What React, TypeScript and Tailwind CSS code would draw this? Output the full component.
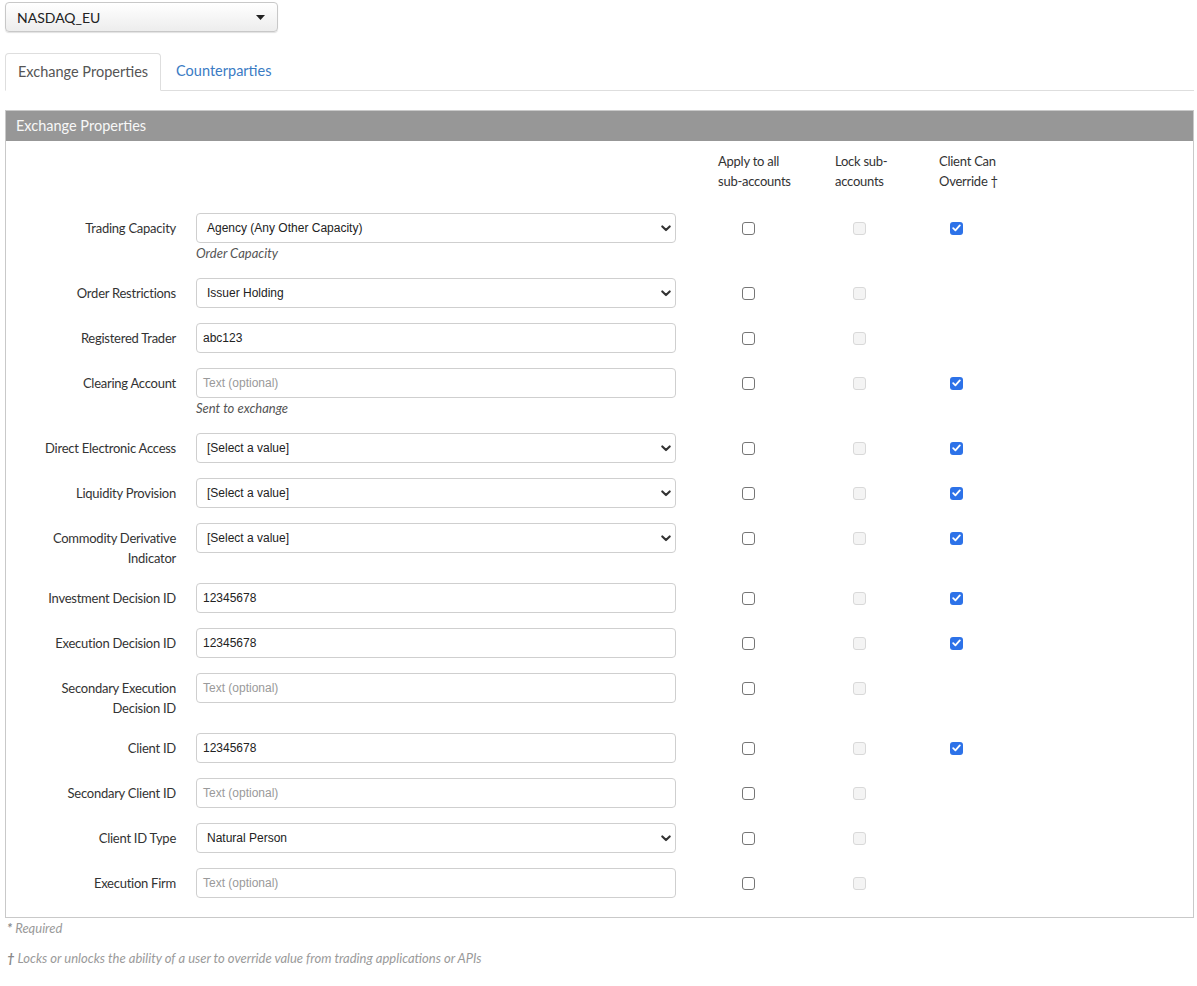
type Row = {
  label: string;
  kind: "select" | "text";
  value?: string;
  help?: string;
  client?: boolean;
};

const rows: Row[] = [
  { label: "Trading Capacity", kind: "select", value: "Agency (Any Other Capacity)", help: "Order Capacity", client: true },
  { label: "Order Restrictions", kind: "select", value: "Issuer Holding" },
  { label: "Registered Trader", kind: "text", value: "abc123" },
  { label: "Clearing Account", kind: "text", help: "Sent to exchange", client: true },
  { label: "Direct Electronic Access", kind: "select", value: "[Select a value]", client: true },
  { label: "Liquidity Provision", kind: "select", value: "[Select a value]", client: true },
  { label: "Commodity Derivative Indicator", kind: "select", value: "[Select a value]", client: true },
  { label: "Investment Decision ID", kind: "text", value: "12345678", client: true },
  { label: "Execution Decision ID", kind: "text", value: "12345678", client: true },
  { label: "Secondary Execution Decision ID", kind: "text" },
  { label: "Client ID", kind: "text", value: "12345678", client: true },
  { label: "Secondary Client ID", kind: "text" },
  { label: "Client ID Type", kind: "select", value: "Natural Person" },
  { label: "Execution Firm", kind: "text" },
];

// labels that wrap in the reference
const wrapped: Record<string, React.ReactNode> = {
  "Commodity Derivative Indicator": (
    <>
      Commodity Derivative
      <br />
      Indicator
    </>
  ),
  "Secondary Execution Decision ID": (
    <>
      Secondary Execution
      <br />
      Decision ID
    </>
  ),
};

function Checkbox({ checked, disabled }: { checked?: boolean; disabled?: boolean }) {
  if (checked) {
    return (
      <span className="flex w-[13px] h-[13px] items-center justify-center rounded-[3px] bg-[#2d72e8]">
        <svg width="9" height="8" viewBox="0 0 9 8" fill="none">
          <path d="M1.2 4.2 3.4 6.3 7.8 1.4" stroke="white" strokeWidth="1.8" strokeLinecap="round" strokeLinejoin="round" />
        </svg>
      </span>
    );
  }
  if (disabled) {
    return <span className="block w-[13px] h-[13px] rounded-[3px] border border-[#d9d9d9] bg-[#f4f4f4]" />;
  }
  return <span className="block w-[13px] h-[13px] rounded-[3px] border border-[#767676] bg-white" />;
}

function Control({ row }: { row: Row }) {
  if (row.kind === "select") {
    return (
      <div className="flex h-[30px] w-full items-center justify-between rounded-[4px] border border-[#cfcfcf] bg-white pl-[10px] pr-[4px] font-['Liberation_Sans',Arial,sans-serif] text-[12px] text-[#222]">
        <span>{row.value}</span>
        <svg width="10" height="7" viewBox="0 0 10 7" fill="none">
          <path d="M1.3 1.4 5 5.1 8.7 1.4" stroke="#333" strokeWidth="2.1" strokeLinecap="round" strokeLinejoin="round" />
        </svg>
      </div>
    );
  }
  return (
    <div className="flex h-[30px] w-full items-center rounded-[4px] border border-[#cfcfcf] bg-white pl-[6px] font-['Liberation_Sans',Arial,sans-serif] text-[12px]">
      {row.value ? (
        <span className="text-[#222]">{row.value}</span>
      ) : (
        <span className="text-[#9a9a9a]">Text (optional)</span>
      )}
    </div>
  );
}

export default function App() {
  return (
    <div className="min-h-[986px] bg-white font-['Lato','Open_Sans',sans-serif] text-[#333]">
      <div className="ml-[5px] w-[1189px] pt-[2px]">
        {/* Exchange picker */}
        <div className="flex h-[30px] w-[273px] items-center justify-between rounded-[4px] border border-[#c8c8c8] bg-gradient-to-b from-white to-[#ededed] pl-[11px] pr-[12px] text-[14px] text-[#222] shadow-[0_1px_1px_rgba(0,0,0,0.12)]">
          <span>NASDAQ_EU</span>
          <svg width="9" height="5" viewBox="0 0 9 5">
            <path d="M0 0h9L4.5 5z" fill="#222" />
          </svg>
        </div>

        {/* Tabs */}
        <div className="mt-[20px] flex items-end border-b border-[#dedede]">
          <div className="-mb-px flex h-[38px] items-center rounded-t-[4px] border border-[#dedede] border-b-white bg-white px-[12px] text-[14.5px] text-[#555]">
            Exchange Properties
          </div>
          <div className="flex h-[38px] items-center px-[15px] text-[14.5px] text-[#3a7bc4]">
            Counterparties
          </div>
        </div>

        {/* Panel */}
        <div className="mt-[19px] border border-[#c9c9c9]">
          <div className="flex h-[30px] items-center bg-[#979797] px-[10px] text-[14.5px] text-[#f7f7f7]">
            Exchange Properties
          </div>
          <div className="pb-[19px] pt-[10px] text-[13px] leading-5">
            <div className="flex tracking-[-0.25px]">
              <div className="w-[670px]" />
              <div className="w-[159px] pl-[42px]">
                Apply to all
                <br />
                sub-accounts
              </div>
              <div className="w-[104px]">
                Lock sub-
                <br />
                accounts
              </div>
              <div>
                Client Can
                <br />
                Override †
              </div>
            </div>

            <div className="mt-[22px] flex flex-col gap-[15px]">
              {rows.map((row) => (
                <div key={row.label} className="flex items-start">
                  <div className="w-[170px] pt-[5px] text-right tracking-[-0.25px]">
                    {wrapped[row.label] ?? row.label}
                  </div>
                  <div className="ml-[20px] w-[480px]">
                    <Control row={row} />
                    {row.help && <div className="italic text-[#555]">{row.help}</div>}
                  </div>
                  <div className="flex h-[30px] w-[159px] items-center pl-[66px]">
                    <Checkbox />
                  </div>
                  <div className="flex h-[30px] w-[104px] items-center pl-[18px]">
                    <Checkbox disabled />
                  </div>
                  <div className="flex h-[30px] items-center pl-[11px]">
                    {row.client && <Checkbox checked />}
                  </div>
                </div>
              ))}
            </div>
          </div>
        </div>

        {/* Footnotes */}
        <div className="pl-[2px] text-[13px] italic leading-5 text-[#9a9a9a]">
          <div>
            <span className="font-bold text-[#888]">*</span> Required
          </div>
          <div className="mt-[10px]">
            <span className="font-bold text-[#888]">†</span> Locks or unlocks the ability of a user to override value from trading applications or APIs
          </div>
        </div>
      </div>
    </div>
  );
}
